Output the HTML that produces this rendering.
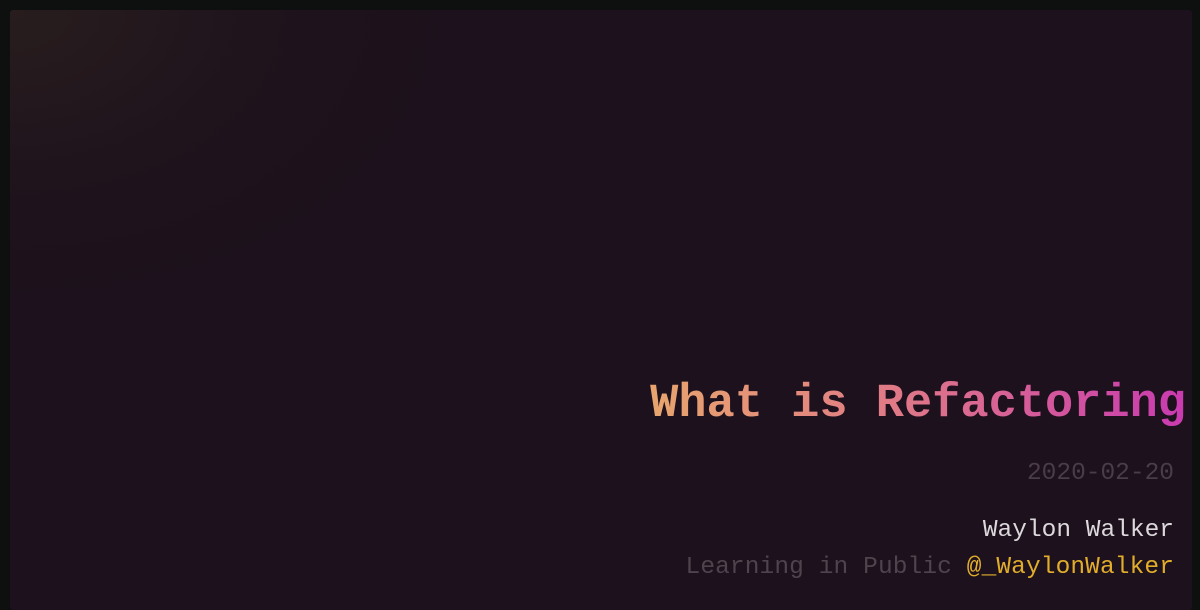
<!DOCTYPE html>
<html><head><style>
html,body{margin:0;padding:0;width:1200px;height:600px;overflow:hidden;background:#0e0f0f;}
.card{position:absolute;left:10px;top:10px;width:1182px;height:600px;border-radius:3px;
background:radial-gradient(ellipse 450px 300px at 0 0,rgba(45,34,30,0.7),rgba(40,28,30,0.25) 55%,rgba(0,0,0,0) 100%),#1c111c;}
.t{position:absolute;right:0;font-family:"Liberation Mono",monospace;white-space:nowrap;}
.title{top:378px;right:14px;font-size:47px;font-weight:bold;background:linear-gradient(90deg,#e8a56e 0%,#e07a86 45%,#c93ab0 100%);-webkit-background-clip:text;background-clip:text;color:transparent;}
.date{top:460px;right:26px;font-size:24.5px;color:#4a3c48;}
.name{top:517px;right:26px;font-size:24.5px;color:#dcd8dc;}
.lip{top:554px;right:26px;font-size:24.5px;color:#4f434d;letter-spacing:0.1px;}
.lip span{color:#e1ad2b;}
</style></head><body>
<div class="card"></div>
<div class="t title">What is Refactoring</div>
<div class="t date">2020-02-20</div>
<div class="t name">Waylon Walker</div>
<div class="t lip">Learning in Public <span>@_WaylonWalker</span></div>
</body></html>
